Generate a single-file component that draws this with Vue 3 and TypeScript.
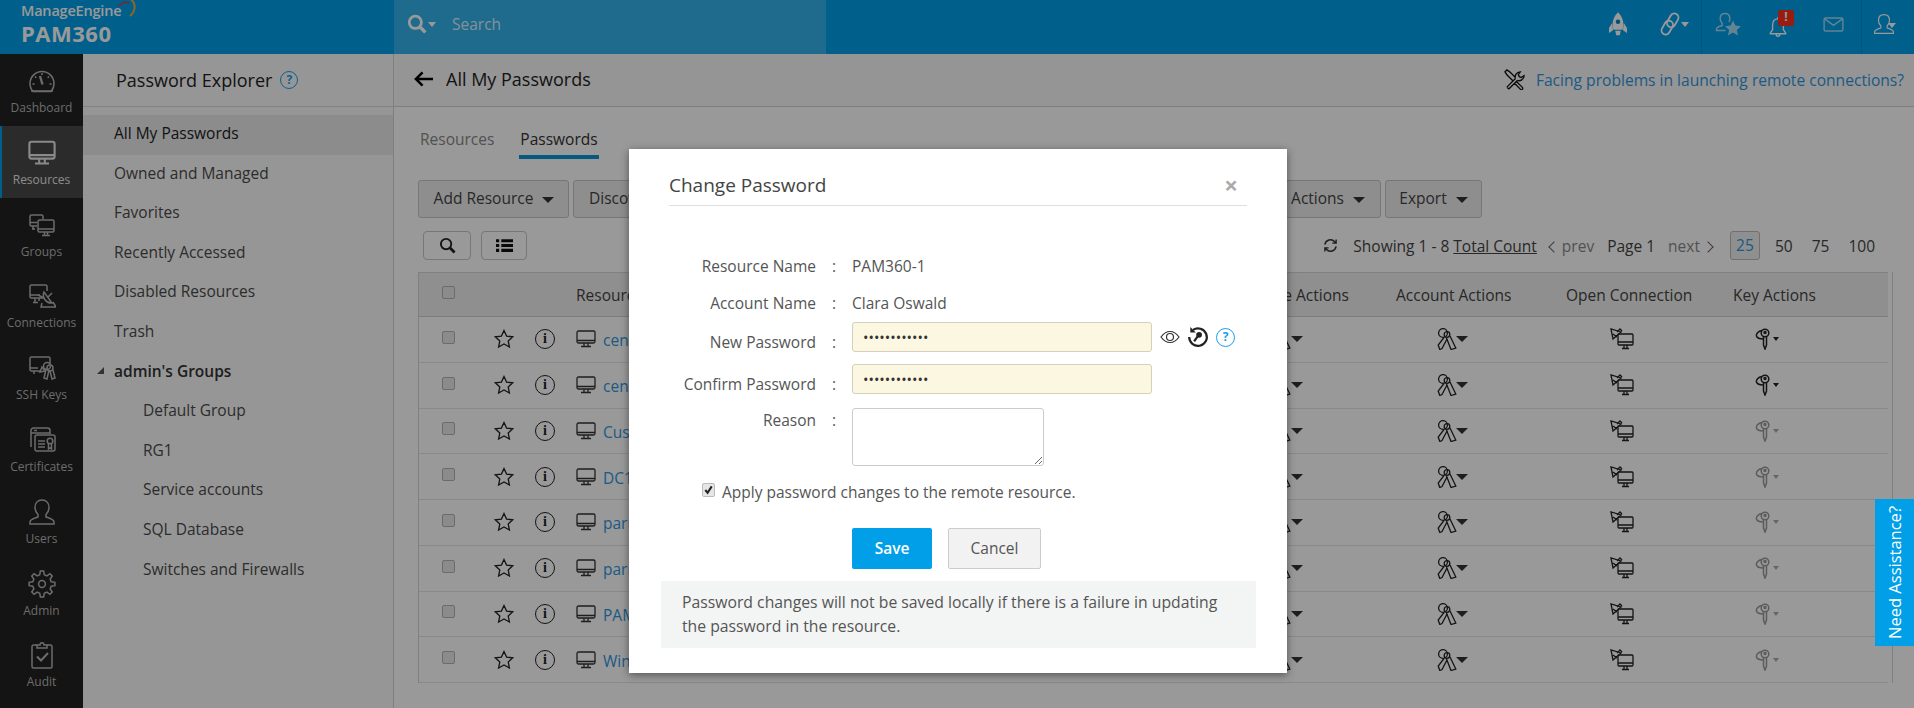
<template>
  <div class="page">
    <svg class="defs" aria-hidden="true">
      <defs>
        <symbol id="i-monitor" viewBox="0 0 20 18">
          <rect x="1" y="1" width="18" height="12" rx="1.5" />
          <path d="M1 10.5h18M8 13v3M12 13v3M5 16.5h10" />
        </symbol>
        <symbol id="i-dashboard" viewBox="0 0 28 28">
          <path d="M5 24.5a12 12 0 1 1 18 0z" />
          <path d="M14 6v2M7 9.5l1.3 1.3M21 9.5l-1.3 1.3M4.500 17h2M21.500 17h2M3 24h22" />
          <path d="M12 9l2.500 8.500" stroke-width="2.400" />
        </symbol>
        <symbol id="i-groups" viewBox="0 0 28 28">
          <path d="M9 15H3.500a1.500 1.500 0 0 1-1.500-1.500v-8A1.500 1.500 0 0 1 3.500 4h10A1.500 1.500 0 0 1 15 5.500V8M2 11.500h7M5 15v3M4 18h3" />
          <rect x="10" y="9" width="16" height="12" rx="1.500" />
          <path d="M10 18h16M16.500 21v3M19.500 21v3M14 24.500h8" />
        </symbol>
        <symbol id="i-connect" viewBox="0 0 28 28">
          <path d="M15 16H3.500A1.500 1.500 0 0 1 2 14.500v-10A1.500 1.500 0 0 1 3.500 3h14A1.500 1.500 0 0 1 19 4.500V9M2 13h10M7 16v4M11 16v3M5 20.500h5" />
          <path d="M16 10a8 8 0 0 0 8 11zM20 15l4-4M10 13l6 3M14 21l-1 4h15l-3-5" />
        </symbol>
        <symbol id="i-ssh" viewBox="0 0 28 28">
          <path d="M12 17H3.500A1.500 1.500 0 0 1 2 15.500v-11A1.500 1.500 0 0 1 3.500 3h17A1.500 1.500 0 0 1 22 4.500V10M2 14h8M12 18l5-1-3-4zM6 17v3" />
          <circle cx="19" cy="12" r="3.500" />
          <circle cx="22" cy="14" r="3" />
          <path d="M18 15l-2 9 3 1 2-9M22 17l2 8 3-1-2-8" />
        </symbol>
        <symbol id="i-cert" viewBox="0 0 28 28">
          <path d="M3 21V4.500A2.500 2.500 0 0 1 5.500 2h14A2.500 2.500 0 0 1 22 4.500V8M3 7h19M6 4.500h3" />
          <rect x="7" y="9" width="20" height="16" rx="2" />
          <path d="M10 15h7M10 18h7M10 21h7" />
          <circle cx="22" cy="15" r="2.800" />
          <path d="M20.500 18v5l1.500-1 1.500 1v-5" />
        </symbol>
        <symbol id="i-user" viewBox="0 0 28 28">
          <path d="M14 2c-4.500 0-7 3.200-7 7.500 0 3 1.300 5.200 3 7v2.500c-3 1.100-8 2.200-8 5V26h24v-2c0-2.800-5-3.900-8-5v-2.500c1.700-1.800 3-4 3-7C21 5.200 18.500 2 14 2z" />
        </symbol>
        <symbol id="i-gear" viewBox="0 0 28 28">
          <path :d="gearPath" />
          <circle cx="14" cy="14" r="3.400" />
        </symbol>
        <symbol id="i-audit" viewBox="0 0 28 28">
          <path d="M9 4H5.500A1.500 1.500 0 0 0 4 5.500v20A1.500 1.500 0 0 0 5.500 27h17a1.500 1.500 0 0 0 1.500-1.500v-20A1.500 1.500 0 0 0 22.500 4H19" />
          <path d="M9 7V4h3c0-3 4-3 4 0h3v3z" />
          <path d="M9 15.500l4 4 7-7.500" stroke-width="2" />
        </symbol>
        <symbol id="i-rocket" viewBox="0 0 20 26">
          <path d="M10 0C6 4 4 8.500 4 13.500c0 2 .4 4 1 6h10c.6-2 1-4 1-6C16 8.500 14 4 10 0z" fill="currentColor" />
          <path d="M3.500 12L0 17.500V23l4.500-3zM16.500 12l3.500 5.500V23l-4.500-3zM7 20.500l1 5h4l1-5z" fill="currentColor" />
          <circle cx="10" cy="10.500" r="2.500" fill="#0085c4" stroke="none" />
        </symbol>
        <symbol id="i-link" viewBox="0 0 24 26">
          <rect x="10.500" y="1" width="9" height="16" rx="4.500" transform="rotate(30 15 9)" />
          <rect x="4.500" y="9" width="9" height="16" rx="4.500" transform="rotate(30 9 17)" />
        </symbol>
        <symbol id="i-userstar" viewBox="0 0 26 24">
          <path d="M10 1.500c-3 0-4.800 2.200-4.800 5.200 0 2 1 3.600 2 4.800v2c-2 .8-5.700 1.500-5.700 3.500v1.500h9" />
          <path d="M10 1.500c3 0 4.800 2.200 4.800 5.200 0 1.300-.3 2.300-.8 3.300" />
          <path d="M18 8.500l2.400 5.100 5.600.6-4.200 3.700 1.300 5.600-5.100-2.900-5.100 2.900 1.300-5.600-4.200-3.700 5.600-.6z" fill="currentColor" stroke="none" />
        </symbol>
        <symbol id="i-bell" viewBox="0 0 20 24">
          <path d="M10 3c-4 0-6 3-6 7v5l-2.500 3.500v1h17v-1L16 15v-5c0-4-2-7-6-7zM8 20c0 3 4 3 4 0M10 1v2" />
        </symbol>
        <symbol id="i-mail" viewBox="0 0 22 16">
          <rect x="1" y="1" width="20" height="14" rx="1.500" />
          <path d="M1.500 2l9.500 7 9.500-7" />
        </symbol>
        <symbol id="i-search" viewBox="0 0 18 18">
          <circle cx="7.500" cy="7.500" r="5.500" />
          <path d="M11.500 11.500l5 5" stroke-width="3" />
        </symbol>
        <symbol id="i-keys" viewBox="0 0 20 22">
          <circle cx="6" cy="5" r="4.400" />
          <circle cx="10" cy="6.500" r="2.800" />
          <path d="M7 9.500L1.200 17l1.600 4.500L5 20.500 10 11" />
          <path d="M9.500 10l4.500 11.500 4.800-1.500-5.800-12" />
        </symbol>
        <symbol id="i-conn" viewBox="0 0 24 22">
          <path d="M1 1l2 10 8-7zM3 6l4 3M7 4l3-3 2 2" />
          <rect x="8" y="6" width="15" height="11" rx="1" />
          <path d="M8 14h15M14 17v3M17 17v3M12 20.500h7" />
        </symbol>
        <symbol id="i-key" viewBox="0 0 16 22">
          <circle cx="10" cy="5" r="3.800" />
          <circle cx="10" cy="4.500" r="1" />
          <path d="M8.500 9v8l1.500 4 1.500-4V9M7 2.500C3 3 1 6 1.500 8S5 11 8.500 11" />
        </symbol>
        <symbol id="i-eye" viewBox="0 0 20 14">
          <path d="M1 7c2.500-3.500 5.500-5.500 9-5.500S16.500 3.500 19 7c-2.500 3.500-5.500 5.500-9 5.500S3.500 10.500 1 7z" />
          <circle cx="10" cy="7" r="3.500" />
        </symbol>
      </defs>
    </svg>

    <header class="topbar">
      <div class="brand">
        <span class="brand-me">ManageEngine</span>
        <span class="brand-name">PAM360</span>
        <svg class="swoosh" viewBox="0 0 20 18">
          <path d="M13 0c5 3 5 11-1 16" stroke="#f2a93c" stroke-width="2" />
          <path d="M1 6c2-3 6-5 10-3" stroke="#d8383a" />
        </svg>
      </div>
      <div class="search">
        <svg class="ic search-ic"><use href="#i-search" /></svg>
        <span class="caret caret-white"></span>
        <span class="search-text">Search</span>
      </div>
      <div class="top-icons">
        <div class="top-cell"><svg class="ic rocket"><use href="#i-rocket" /></svg></div>
        <div class="top-cell"><svg class="ic link"><use href="#i-link" /></svg><span class="caret caret-white"></span></div>
        <div class="top-cell sep muted"><svg class="ic userstar"><use href="#i-userstar" /></svg></div>
        <div class="top-cell">
          <span class="bell-wrap">
            <svg class="ic bell"><use href="#i-bell" /></svg>
            <span class="badge">!</span>
          </span>
        </div>
        <div class="top-cell muted"><svg class="ic mail"><use href="#i-mail" /></svg></div>
        <div class="top-cell sep last"><svg class="ic person"><use href="#i-user" /></svg><span class="caret caret-white over"></span></div>
      </div>
    </header>

    <div class="body">
      <nav class="nav">
        <a v-for="n in navItems" :key="n.label" class="nav-item" :class="{ active: n.active }">
          <svg class="ic nav-ic"><use :href="`#${n.icon}`" /></svg>
          <span>{{ n.label }}</span>
        </a>
      </nav>

      <aside class="side">
        <div class="side-head">
          <span>Password Explorer</span>
          <span class="help help-dim">?</span>
        </div>
        <ul class="side-list">
          <li v-for="(s, i) in sideItems" :key="s" :class="{ selected: i === 0 }">{{ s }}</li>
          <li class="group"><span class="tri"></span>admin's Groups</li>
          <li v-for="g in groupItems" :key="g" class="child">{{ g }}</li>
        </ul>
      </aside>

      <main class="main">
        <div class="main-head">
          <svg class="back" viewBox="0 0 22 18"><path d="M21 9H3M10 2L3 9l7 7" /></svg>
          <span class="main-title">All My Passwords</span>
          <svg class="wrench" viewBox="0 0 22 22">
            <path d="M3 19l9-9M5 21l9-9M3 19l2 2M12 10c-1-3 1-7 5-7l-2 3 1 2 2 1 3-2c0 4-4 6-7 5M9 12L3 6 1 3l2-2 3 2 6 6M13 13l6 6c2 2-1 4-2 2l-6-6" />
          </svg>
          <a class="problem">Facing problems in launching remote connections?</a>
        </div>

        <div class="content">
          <div class="tabs">
            <span class="tab">Resources</span>
            <span class="tab on">Passwords</span>
          </div>

          <div class="toolbar">
            <button class="btn first">Add Resource <span class="caret"></span></button>
            <button class="btn mid">Discovery <span class="caret"></span></button>
            <button class="btn mid end">Password Actions <span class="caret"></span></button>
            <button class="btn last-btn">Export <span class="caret"></span></button>
          </div>

          <div class="subbar">
            <div class="subbar-left">
              <button class="mini"><svg class="ic mini-search"><use href="#i-search" /></svg></button>
              <button class="mini narrow">
                <svg class="list-ic" viewBox="0 0 16 14">
                  <path d="M0 1h3v3H0zM5 1h11v3H5zM0 5.500h3v3H0zM5 5.500h11v3H5zM0 10h3v3H0zM5 10h11v3H5z" />
                </svg>
              </button>
            </div>
            <div class="pager">
              <svg class="refresh" viewBox="0 0 16 16">
                <path d="M2 7a6 6 0 0 1 10.500-3L14 5.500M14 9a6 6 0 0 1-10.500 3L2 10.500M14 1.500v4h-4M2 14.500v-4h4" />
              </svg>
              <span class="showing">Showing 1 - 8 <u>Total Count</u></span>
              <span class="pg-nav"><i class="chev left"></i>prev</span>
              <span class="pg-cur">Page 1</span>
              <span class="pg-nav">next<i class="chev right"></i></span>
              <span class="size on">25</span>
              <span class="size s50">50</span>
              <span class="size s75">75</span>
              <span class="size s100">100</span>
            </div>
          </div>

          <div class="grid-wrap">
            <div class="row head">
              <div class="c-check"><span class="cb"></span></div>
              <div class="c-star"></div>
              <div class="c-info"></div>
              <div class="c-name">Resource Name</div>
              <div class="c-act">Resource Actions</div>
              <div class="c-acc">Account Actions</div>
              <div class="c-conn">Open Connection</div>
              <div class="c-key">Key Actions</div>
            </div>
            <div v-for="r in rows" :key="r.name" class="row">
              <div class="c-check"><span class="cb"></span></div>
              <div class="c-star">
                <svg class="star" viewBox="0 0 20 20"><path d="M10 1.500l2.600 5.600 6.100.7-4.500 4.200 1.200 6-5.400-3-5.400 3 1.200-6L1.300 7.800l6.100-.7z" /></svg>
              </div>
              <div class="c-info"><span class="info">i</span></div>
              <div class="c-name">
                <svg class="ic row-mon"><use href="#i-monitor" /></svg>
                <a class="res-link">{{ r.name }}</a>
              </div>
              <div class="c-act act-ic">
                <svg class="ic keys"><use href="#i-keys" /></svg><span class="caret"></span>
              </div>
              <div class="c-acc acc-ic">
                <svg class="ic keys"><use href="#i-keys" /></svg><span class="caret"></span>
              </div>
              <div class="c-conn conn-ic"><svg class="ic conn"><use href="#i-conn" /></svg></div>
              <div class="c-key key-ic" :class="{ off: !r.key }">
                <svg class="ic key"><use href="#i-key" /></svg><span class="caret tiny"></span>
              </div>
            </div>
          </div>
        </div>
      </main>
    </div>

    <div class="overlay">
      <section class="modal">
        <div class="modal-head">
          <h2>Change Password</h2>
          <span class="close">×</span>
        </div>
        <div class="form">
          <div class="frow info-row"><label>Resource Name</label><span class="colon">:</span><span>PAM360-1</span></div>
          <div class="frow info-row"><label>Account Name</label><span class="colon">:</span><span>Clara Oswald</span></div>
          <div class="frow pass-row">
            <label>New Password</label><span class="colon">:</span>
            <div class="field">
              <input class="pw" type="password" value="password1234" readonly />
              <svg class="ic eye"><use href="#i-eye" /></svg>
              <svg class="reset" viewBox="0 0 20 20">
                <path d="M5.500 3.500A8 8 0 1 1 2 10" fill="none" stroke="#222" stroke-width="2" />
                <path d="M3 1v5h5z" fill="#222" />
                <circle cx="11" cy="8" r="2.600" fill="#222" />
                <path d="M10 9l-3.500 5" stroke="#222" stroke-width="2" />
              </svg>
              <span class="help">?</span>
            </div>
          </div>
          <div class="frow pass-row">
            <label>Confirm Password</label><span class="colon">:</span>
            <div class="field"><input class="pw" type="password" value="password1234" readonly /></div>
          </div>
          <div class="frow reason-row">
            <label>Reason</label><span class="colon">:</span>
            <textarea class="reason"></textarea>
          </div>
        </div>
        <div class="apply">
          <span class="apply-box">
            <svg viewBox="0 0 12 12"><path d="M2.500 6l2.500 3 4.500-7" /></svg>
          </span>
          <span>Apply password changes to the remote resource.</span>
        </div>
        <div class="actions">
          <button class="save">Save</button>
          <button class="cancel">Cancel</button>
        </div>
        <div class="note">Password changes will not be saved locally if there is a failure in updating the password in the resource.</div>
      </section>
    </div>

    <div class="assist"><span>Need Assistance?</span></div>
  </div>
</template>

<script setup lang="ts">
interface NavItem {
  label: string;
  icon: string;
  active?: boolean;
}

const navItems: NavItem[] = [
  { label: "Dashboard", icon: "i-dashboard" },
  { label: "Resources", icon: "i-monitor", active: true },
  { label: "Groups", icon: "i-groups" },
  { label: "Connections", icon: "i-connect" },
  { label: "SSH Keys", icon: "i-ssh" },
  { label: "Certificates", icon: "i-cert" },
  { label: "Users", icon: "i-user" },
  { label: "Admin", icon: "i-gear" },
  { label: "Audit", icon: "i-audit" },
];

const sideItems = ["All My Passwords", "Owned and Managed", "Favorites", "Recently Accessed", "Disabled Resources", "Trash"];
const groupItems = ["Default Group", "RG1", "Service accounts", "SQL Database", "Switches and Firewalls"];

const rows = [
  { name: "centos-1", key: true },
  { name: "centos-2", key: true },
  { name: "Customer", key: false },
  { name: "DC1", key: false },
  { name: "parrot-1", key: false },
  { name: "parrot-2", key: false },
  { name: "PAM360-1", key: false },
  { name: "Windows", key: false },
];

// gear outline, 8 teeth
function buildGear(): string {
  const pts: string[] = [];
  const steps = 8;
  for (let i = 0; i < steps; i++) {
    const a = (i / steps) * Math.PI * 2;
    const w = Math.PI / steps;
    const ring: [number, number][] = [
      [9.5, a - w * 0.62],
      [13, a - w * 0.32],
      [13, a + w * 0.32],
      [9.5, a + w * 0.62],
    ];
    for (const [r, t] of ring) {
      pts.push(`${(14 + r * Math.cos(t)).toFixed(2)} ${(14 + r * Math.sin(t)).toFixed(2)}`);
    }
  }
  return `M${pts.join("L")}Z`;
}

const gearPath = buildGear();
</script>

<style>
html,
body {
  margin: 0;
  height: 100%;
  overflow: hidden;
}
</style>

<style scoped>
.page {
  position: relative;
  width: 1914px;
  height: 708px;
  overflow: hidden;
  background: #fff;
  font-family: "Open Sans", sans-serif;
  font-size: 15.500px;
  color: #444;
  display: flex;
  flex-direction: column;
}

.defs {
  position: absolute;
  width: 0;
  height: 0;
}

.ic {
  fill: none;
  stroke: currentColor;
  stroke-width: 1.5;
  display: block;
}

.caret {
  display: inline-block;
  width: 0;
  height: 0;
  border-left: 6px solid transparent;
  border-right: 6px solid transparent;
  border-top: 6px solid #333;
  vertical-align: middle;
}

.caret-white {
  border-left-width: 4px;
  border-right-width: 4px;
  border-top: 5px solid #fff;
}

.caret.over {
  margin-left: -7px;
  margin-top: 2px;
}

.caret.tiny {
  border-left-width: 3.500px;
  border-right-width: 3.500px;
  border-top-width: 4px;
}

/* top bar */
.topbar {
  flex: 0 0 54px;
  display: flex;
  background: #009fe8;
  color: #fff;
}

.brand {
  position: relative;
  width: 394px;
  padding: 2px 0 0 21px;
  box-sizing: border-box;
  display: flex;
  flex-direction: column;
}

.brand-me {
  font-size: 14.500px;
  font-weight: 600;
  line-height: 18px;
  letter-spacing: -0.2px;
}

.brand-name {
  font-size: 22px;
  font-weight: 700;
  line-height: 26px;
  letter-spacing: 0.5px;
}

.swoosh {
  position: absolute;
  left: 118px;
  top: 0;
  width: 20px;
  height: 18px;
  fill: none;
  stroke-width: 1.500;
}

.search {
  width: 432px;
  background: rgba(255, 255, 255, 0.2);
  display: flex;
  align-items: center;
  padding: 0 0 6px 13px;
  box-sizing: border-box;
}

.search-ic {
  width: 20px;
  height: 20px;
  stroke-width: 2.500;
  margin-right: 1px;
}

.search-text {
  margin-left: 16px;
  font-size: 15.500px;
  color: rgba(255, 255, 255, 0.85);
}

.top-icons {
  margin-left: auto;
  padding-right: 3px;
  display: flex;
}

.top-cell {
  width: 53px;
  padding-bottom: 6px;
  box-sizing: border-box;
  display: flex;
  align-items: center;
  justify-content: center;
}

.top-cell.sep {
  border-left: 1px solid #0090d4;
  margin-left: 1px;
}

.top-cell.last {
  width: 50px;
  padding-right: 4px;
}

.muted {
  color: #a4dcf5;
}

.rocket {
  width: 18px;
  height: 24px;
  stroke: none;
  margin-right: 6px;
}

.link {
  width: 22px;
  height: 24px;
  stroke-width: 2;
}

.userstar {
  width: 26px;
  height: 24px;
}

.bell-wrap {
  position: relative;
  display: block;
  margin-right: 5px;
}

.bell {
  width: 18px;
  height: 22px;
  margin-top: 6px;
}

.badge {
  position: absolute;
  left: 9px;
  top: 0;
  width: 16px;
  height: 16px;
  background: #fc2f1e;
  border-radius: 2px;
  font-size: 12px;
  line-height: 14px;
  font-weight: 700;
  text-align: center;
}

.mail {
  width: 21px;
  height: 15px;
}

.person {
  width: 22px;
  height: 22px;
}

/* layout */
.body {
  flex: 1;
  display: flex;
  min-height: 0;
}

.nav {
  flex: 0 0 83px;
  background: #222;
  color: #b4b4b4;
  font-size: 12px;
}

.nav-item {
  height: 71.800px;
  box-sizing: border-box;
  padding-top: 13px;
  display: flex;
  flex-direction: column;
  align-items: center;
  line-height: 18px;
}

.nav-item.active {
  background: #484848;
  border-left: 2px solid #009fe8;
  padding-right: 2px;
  color: #e6e6e6;
}

.nav-ic {
  width: 28px;
  height: 28px;
  margin-bottom: 4px;
}

.side {
  flex: 0 0 311px;
  box-sizing: border-box;
  background: #fafafa;
  border-right: 1px solid #d4d4d4;
  color: #4a4a4a;
}

.side-head {
  height: 53px;
  box-sizing: border-box;
  border-bottom: 1px solid #d9d9d9;
  padding: 0 0 1px 33px;
  display: flex;
  align-items: center;
  gap: 8px;
  font-size: 18px;
  color: #222;
}

.help {
  width: 16px;
  height: 16px;
  border: 1.500px solid #18a0ee;
  border-radius: 50%;
  color: #18a0ee;
  font-size: 12px;
  font-weight: 700;
  line-height: 16px;
  text-align: center;
  display: inline-block;
}

.help-dim {
  width: 16px;
  height: 16px;
}

.side-list {
  list-style: none;
  margin: 8px 0 0;
  padding: 0;
  font-size: 15.500px;
}

.side-list li {
  height: 39.600px;
  line-height: 36.400px;
  padding-left: 31px;
}

.side-list .selected {
  background: #e9e9e9;
  color: #222;
}

.side-list .group {
  position: relative;
  font-weight: 600;
  color: #333;
}

.tri {
  position: absolute;
  left: 14px;
  top: 14px;
  width: 0;
  height: 0;
  border-left: 7px solid transparent;
  border-bottom: 7px solid #555;
}

.side-list .child {
  padding-left: 60px;
}

.main {
  flex: 1;
  min-width: 0;
  background: #fff;
}

.main-head {
  height: 53px;
  box-sizing: border-box;
  background: #f8f8f8;
  border-bottom: 1px solid #d4d4d4;
  display: flex;
  align-items: center;
  padding: 0 10px 3px 19px;
}

.back {
  width: 21px;
  height: 18px;
  fill: none;
  stroke: #000;
  stroke-width: 2.600;
}

.main-title {
  margin-left: 12px;
  font-size: 18px;
  color: #222;
}

.wrench {
  margin: 2px 0 0 auto;
  width: 21px;
  height: 21px;
  fill: none;
  stroke: #111;
  stroke-width: 1.400;
}

.problem {
  margin: 2px 0 0 11px;
  font-size: 15.600px;
  color: #2f96dc;
}

.content {
  padding: 20px 0 0 24px;
}

.tabs {
  display: flex;
  gap: 24px;
  margin-left: 1px;
}

.tab {
  padding: 0 1px 4px;
  border-bottom: 4px solid transparent;
  line-height: 24px;
  color: #888;
}

.tab.on {
  border-bottom-color: #0a93d5;
  color: #333;
}

.toolbar {
  display: flex;
  gap: 4px;
  margin-top: 21px;
  width: 1064px;
}

.btn {
  height: 38px;
  padding: 0 0 2px;
  background: #ededed;
  border: 1px solid #c6c6c6;
  border-radius: 3px;
  font: inherit;
  color: #444;
  white-space: nowrap;
}

.btn .caret {
  margin-left: 5px;
}

.btn.first {
  width: 151px;
  padding-left: 1px;
}

.btn.last-btn {
  width: 97px;
}

.btn.mid {
  width: 400px;
  padding: 0 15px 2px;
  text-align: left;
}

.btn.end {
  width: 404px;
  text-align: right;
}

.subbar {
  display: flex;
  justify-content: space-between;
  margin-top: 13px;
  padding: 0 39px 0 5px;
  height: 29px;
}

.subbar-left {
  display: flex;
  gap: 10px;
}

.mini {
  width: 48px;
  height: 29px;
  background: #fff;
  border: 1px solid #c6c6c6;
  border-radius: 4px;
  padding: 0;
  display: flex;
  align-items: center;
  justify-content: center;
}

.mini.narrow {
  width: 46px;
}

.mini-search {
  width: 17px;
  height: 17px;
  color: #222;
  stroke-width: 2;
}

.list-ic {
  width: 17px;
  height: 15px;
  fill: #111;
}

.pager {
  display: flex;
  align-items: center;
  font-size: 15.500px;
  color: #444;
  white-space: nowrap;
}

.refresh {
  width: 15px;
  height: 15px;
  fill: none;
  stroke: #333;
  stroke-width: 1.500;
  margin-right: 15px;
}

.showing {
  margin-right: 11px;
}

.pg-nav {
  color: #888;
  display: flex;
  align-items: center;
}

.pg-cur {
  margin: 0 13px;
}

.chev {
  width: 7px;
  height: 7px;
  border-left: 1.500px solid #666;
  border-bottom: 1.500px solid #666;
  display: block;
}

.chev.left {
  transform: rotate(45deg);
  margin: 2px 4px 0 2px;
}

.chev.right {
  transform: rotate(-135deg);
  margin: 2px 2px 0 4px;
}

.size.on {
  box-sizing: border-box;
  width: 30px;
  height: 29px;
  line-height: 27px;
  margin-left: 16px;
  text-align: center;
  border: 1px solid #bbb;
  border-radius: 3px;
  background: #eee;
  color: #2f96dc;
}

.s50 {
  margin-left: 15px;
}

.s75,
.s100 {
  margin-left: 19px;
}

.grid-wrap {
  margin-top: 12px;
  width: 1475px;
  box-sizing: border-box;
  padding-right: 4px;
  border-left: 1px solid #d6d6d6;
  border-right: 1px solid #d6d6d6;
}

.row {
  display: grid;
  grid-template-columns: 66px 36px 48px 649px 172px 170px 167px 1fr;
  align-items: center;
  height: 45.750px;
  box-sizing: border-box;
  border-bottom: 1px solid #e4e4e4;
}

.row.head {
  height: 45px;
  background: #eee;
  border-top: 1px solid #d6d6d6;
  border-bottom: 1px solid #d0d0d0;
  color: #444;
  white-space: nowrap;
}

.row > div {
  display: flex;
  align-items: center;
  min-width: 0;
  white-space: nowrap;
}

.c-check {
  padding-left: 23px;
}

.row .c-star,
.row .c-info {
  justify-content: center;
}

.row .c-star {
  padding-left: 2px;
}

.c-name {
  padding-left: 7px;
}

.c-act {
  padding-left: 7px;
}

.c-acc,
.c-conn,
.c-key {
  padding-left: 6px;
}

.cb {
  box-sizing: border-box;
  width: 13px;
  height: 13px;
  border: 1px solid #b2b2b2;
  border-radius: 2px;
  background: #e8e8e8;
  display: block;
  margin-top: -4px;
}

.star {
  width: 20px;
  height: 20px;
  fill: none;
  stroke: #222;
  stroke-width: 1.300;
}

.info {
  box-sizing: border-box;
  width: 20px;
  height: 20px;
  border: 1.300px solid #222;
  border-radius: 50%;
  font-family: "Liberation Serif", serif;
  font-size: 14px;
  font-weight: 700;
  line-height: 17px;
  text-align: center;
  color: #222;
}

.row-mon {
  width: 20px;
  height: 18px;
  color: #333;
  stroke-width: 1.300;
}

.res-link {
  margin-left: 7px;
  margin-top: 2px;
  color: #2f96dc;
}

.act-ic {
  padding-left: 53px !important;
}

.acc-ic {
  padding-left: 47px !important;
}

.acc-ic .caret {
  margin-left: -1px;
}

.keys {
  width: 20px;
  height: 22px;
  color: #222;
  stroke-width: 1.300;
}

.conn-ic {
  padding-left: 50px !important;
}

.conn {
  width: 24px;
  height: 22px;
  color: #222;
  stroke-width: 1.300;
}

.key-ic {
  padding-left: 28px !important;
  color: #222;
}

.key-ic .caret {
  margin-left: 2px;
  border-top-color: #222;
}

.key-ic.off {
  color: #999;
}

.key-ic.off .caret {
  border-top-color: #aaa;
}

.key {
  width: 16px;
  height: 22px;
}

/* dim layer + dialog */
.overlay {
  position: absolute;
  inset: 0;
  background: rgba(0, 0, 0, 0.4);
  display: flex;
  justify-content: center;
  align-items: flex-start;
  padding: 149px 0 0 2px;
  box-sizing: border-box;
}

.modal {
  width: 658px;
  height: 524px;
  box-sizing: border-box;
  background: #fff;
  box-shadow: 0 2px 8px rgba(0, 0, 0, 0.45);
  font-size: 15.500px;
  color: #555;
}

.modal-head {
  margin: 0 40px;
  padding: 24px 0 8px;
  border-bottom: 1px solid #dedede;
  display: flex;
  justify-content: space-between;
  align-items: center;
}

.modal-head h2 {
  margin: 0;
  font-size: 19px;
  font-weight: 400;
  line-height: 24px;
  color: #444;
}

.close {
  font-size: 24px;
  line-height: 24px;
  font-weight: 700;
  color: #aaa;
  margin-right: 9px;
}

.form {
  margin-top: 43px;
}

.frow {
  display: grid;
  grid-template-columns: 187px 36px 1fr;
  line-height: 20px;
}

.frow label {
  text-align: right;
}

.colon {
  text-align: center;
}

.info-row {
  height: 36px;
  padding-top: 8px;
  box-sizing: border-box;
}

.info-row:first-child {
  padding-top: 7px;
}

.pass-row {
  height: 30px;
  margin-bottom: 12px;
}

.pass-row:nth-child(3) {
  margin-top: 1px;
}

.pass-row:nth-child(4) {
  margin-bottom: 14px;
}

.pass-row label,
.pass-row .colon {
  padding-top: 10px;
}

.field {
  display: flex;
  align-items: center;
}

.pw {
  box-sizing: border-box;
  width: 300px;
  height: 30px;
  padding: 0 10px;
  background: #fcf7e0;
  border: 1px solid #d4d0bc;
  border-radius: 3px;
  font-family: "Open Sans", sans-serif;
  font-size: 14.500px;
  color: #333;
  outline: none;
}

.eye {
  width: 20px;
  height: 14px;
  margin-left: 8px;
  color: #333;
  stroke-width: 1.200;
}

.reset {
  width: 22px;
  height: 22px;
  margin-left: 7px;
}

.field .help {
  width: 17px;
  height: 17px;
  margin-left: 7px;
}

.reason-row {
  height: 58px;
}

.reason-row label,
.reason-row .colon {
  padding-top: 2px;
}

.reason {
  box-sizing: border-box;
  width: 192px;
  height: 58px;
  border: 1px solid #ccc;
  border-radius: 3px;
  outline: none;
  resize: both;
}

.apply {
  margin: 16px 0 0 73px;
  display: flex;
  align-items: center;
  gap: 7px;
  line-height: 20px;
}

.apply-box {
  box-sizing: border-box;
  width: 13px;
  height: 14px;
  margin-top: -4px;
  border: 1px solid #bbb;
  border-radius: 2px;
  background: #e6e6e6;
  display: block;
}

.apply-box svg {
  display: block;
  width: 11px;
  height: 12px;
  fill: none;
  stroke: #222;
  stroke-width: 2.200;
}

.actions {
  margin: 26px 0 0 223px;
  display: flex;
  gap: 16px;
}

.save,
.cancel {
  height: 41px;
  border-radius: 2px;
  font-family: inherit;
  font-size: 15.500px;
  padding: 0 0 2px;
}

.save {
  width: 80px;
  background: #009fe8;
  border: 0;
  color: #fff;
  font-weight: 600;
}

.cancel {
  width: 93px;
  background: #f2f2f2;
  border: 1px solid #ccc;
  color: #555;
}

.note {
  margin: 12px 31px 0 32px;
  padding: 9px 20px 10px 21px;
  height: 67px;
  box-sizing: border-box;
  background: #f3f4f4;
  font-size: 15.750px;
  line-height: 24px;
}

.assist {
  position: absolute;
  right: 0;
  top: 499px;
  width: 39px;
  height: 147px;
  background: #009fe8;
  color: #fff;
  display: flex;
  align-items: center;
  justify-content: center;
}

.assist span {
  writing-mode: vertical-rl;
  transform: rotate(180deg);
  font-size: 16.500px;
  white-space: nowrap;
}
</style>
